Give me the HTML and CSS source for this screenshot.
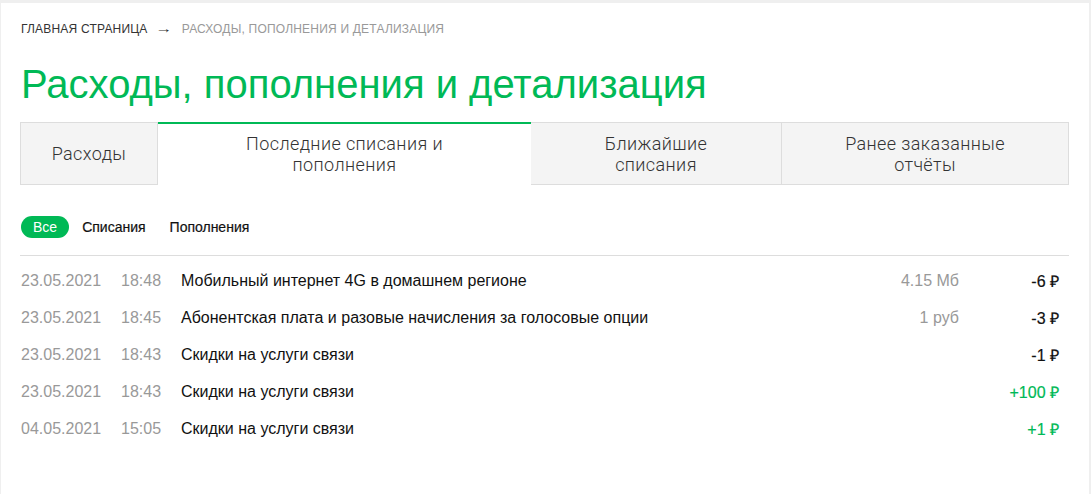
FILE: index.html
```html
<!DOCTYPE html>
<html lang="ru">
<head>
<meta charset="utf-8">
<title>Расходы, пополнения и детализация</title>
<link rel="stylesheet" href="styles.css">
</head>
<body>
<div class="page">
  <div class="card">
    <nav class="crumbs">
      <span class="crumb-home">Главная страница</span>
      <span class="crumb-arrow">→</span>
      <span class="crumb-current">Расходы, пополнения и детализация</span>
    </nav>
    <h1 class="title">Расходы, пополнения и детализация</h1>
    <div class="tabs">
      <div class="tab tab-1">Расходы</div>
      <div class="tab tab-2 active">Последние списания и<br>пополнения</div>
      <div class="tab tab-3">Ближайшие<br>списания</div>
      <div class="tab tab-4">Ранее заказанные<br>отчёты</div>
    </div>
    <div class="filters">
      <span class="pill on">Все</span>
      <span class="pill">Списания</span>
      <span class="pill">Пополнения</span>
    </div>
    <div class="list">
      <div class="row">
        <span class="date">23.05.2021</span><span class="time">18:48</span>
        <span class="desc">Мобильный интернет 4G в домашнем регионе</span>
        <span class="unit">4.15 Мб</span><span class="amount">-6 ₽</span>
      </div>
      <div class="row">
        <span class="date">23.05.2021</span><span class="time">18:45</span>
        <span class="desc">Абонентская плата и разовые начисления за голосовые опции</span>
        <span class="unit">1 руб</span><span class="amount">-3 ₽</span>
      </div>
      <div class="row">
        <span class="date">23.05.2021</span><span class="time">18:43</span>
        <span class="desc">Скидки на услуги связи</span>
        <span class="unit"></span><span class="amount">-1 ₽</span>
      </div>
      <div class="row">
        <span class="date">23.05.2021</span><span class="time">18:43</span>
        <span class="desc">Скидки на услуги связи</span>
        <span class="unit"></span><span class="amount plus">+100 ₽</span>
      </div>
      <div class="row">
        <span class="date">04.05.2021</span><span class="time">15:05</span>
        <span class="desc">Скидки на услуги связи</span>
        <span class="unit"></span><span class="amount plus">+1 ₽</span>
      </div>
    </div>
  </div>
</div>
</body>
</html>
```
FILE: styles.css
```css
html, body {
  margin: 0;
  padding: 0;
  background: #efefef;
}
body {
  font-family: "Liberation Sans", Arial, sans-serif;
  color: #222;
}
.page {
  padding: 3px 2px 0 1px;
  height: 491px;
  overflow: hidden;
}
.card {
  background: #fff;
  height: 100%;
  padding: 18px 20px 0 19px;
  box-sizing: border-box;
}
.crumbs {
  font-size: 12px;
  line-height: 16px;
  text-transform: uppercase;
  display: flex;
  align-items: center;
  letter-spacing: 0.2px;
  padding-left: 1px;
}
.crumb-home { color: #333; }
.crumb-arrow { color: #333; margin: 0 12px 0 9px; font-size: 13px; transform: scaleX(1.3); }
.crumb-current { color: #999; }
.title {
  margin: 24px 0 0 1px;
  font-weight: 400;
  font-size: 40px;
  line-height: 46px;
  color: #00b956;
}
.tabs {
  display: flex;
  margin-top: 15px;
  height: 63px;
}
.tab {
  box-sizing: border-box;
  background: #f4f4f4;
  border: 1px solid #ddd;
  border-left: none;
  display: flex;
  align-items: center;
  justify-content: center;
  text-align: center;
  font-family: Roboto, "Liberation Sans", sans-serif;
  font-weight: 300;
  font-size: 18px;
  letter-spacing: 0.4px;
  line-height: 21px;
  color: #333;
}
.tab-1 { width: 138px; border-left: 1px solid #ddd; }
.tab-2 { width: 373px; }
.tab-3 { width: 251px; }
.tab-4 { width: 287px; }
.tab.active {
  background: #fff;
  border: none;
  border-top: 2px solid #00b956;
  padding-bottom: 2px;
}
.filters {
  display: flex;
  align-items: center;
  margin-top: 31px;
}
.pill {
  font-size: 14px;
  line-height: 22px;
  color: #111;
  margin-right: 24px;
  -webkit-text-stroke: 0.2px #111;
}
.pill.on {
  background: #00b956;
  color: #fff;
  -webkit-text-stroke: 0;
  border-radius: 12px;
  padding: 0 12px;
  margin-left: 1px;
  margin-right: 13px;
}
.list {
  margin-top: 17px;
  border-top: 1px solid #ddd;
  padding-top: 6px;
}
.row {
  display: flex;
  align-items: center;
  height: 37px;
  font-size: 16px;
}
.date { color: #999; width: 100px; margin-left: 1px; }
.time { color: #999; width: 60px; }
.desc { color: #111; flex: 1; }
.unit { color: #999; width: 120px; text-align: right; }
.amount {
  width: 100px;
  text-align: right;
  color: #111;
  -webkit-text-stroke: 0.2px #111;
  padding-right: 10px;
}
.amount.plus { color: #00b956; -webkit-text-stroke: 0.2px #00b956; }
```
